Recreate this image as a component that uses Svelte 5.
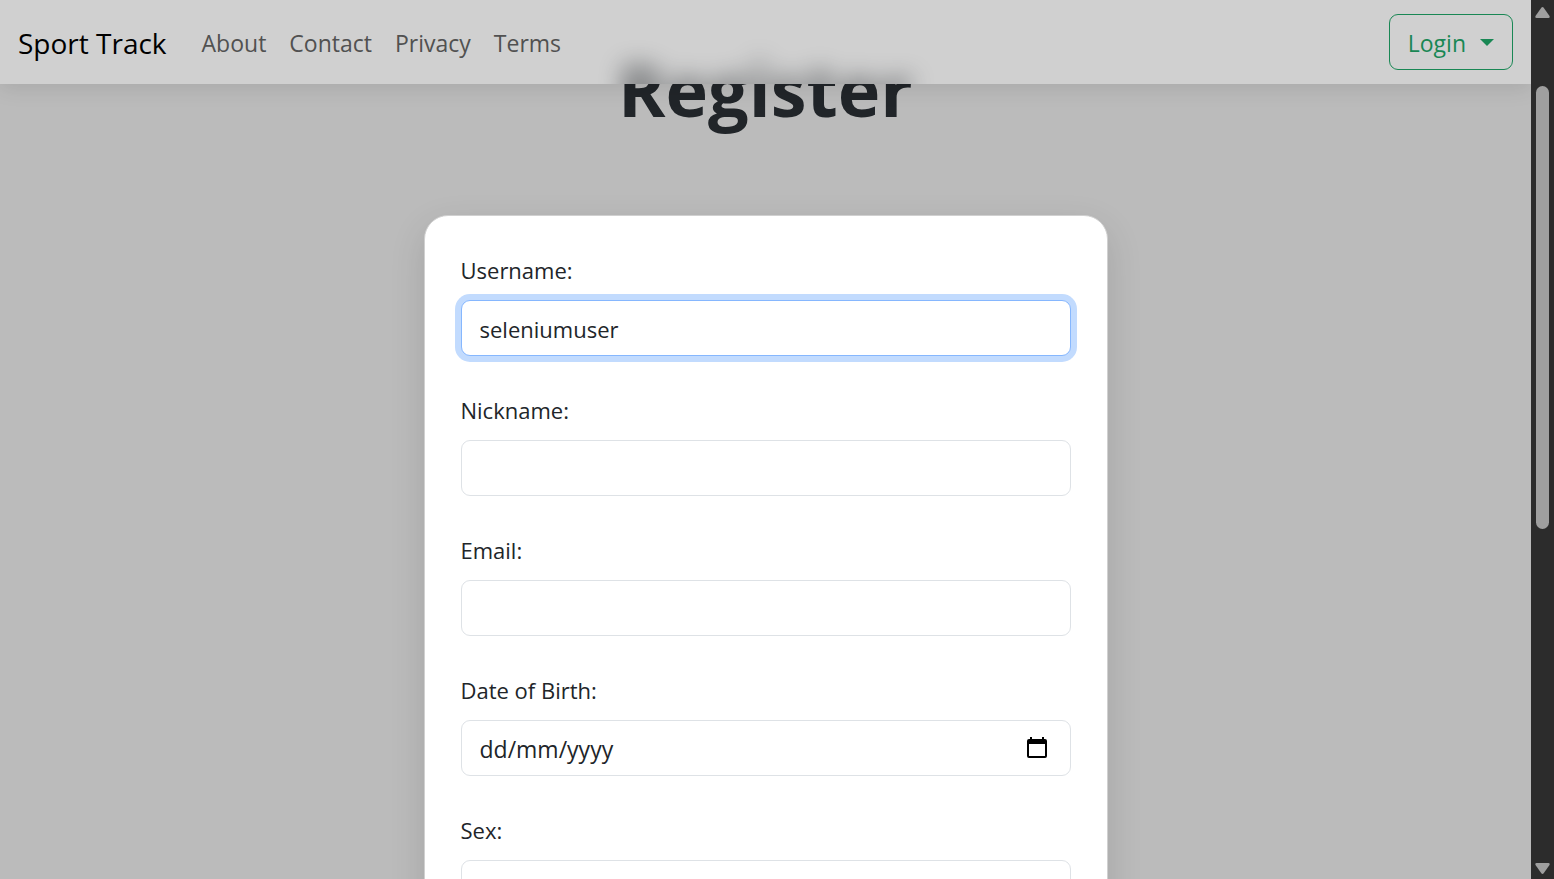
<script>
  const title = 'Register';
  const links = ['About', 'Contact', 'Privacy', 'Terms'];
  let username = $state('seleniumuser');
</script>

<div class="window">
  <div class="page">
    <main>
      <h1>{title}</h1>
      <form>
        <div class="field">
          <label for="username">Username:</label>
          <input id="username" class="control active" type="text" bind:value={username} />
        </div>
        <div class="field">
          <label for="nickname">Nickname:</label>
          <input id="nickname" class="control" type="text" />
        </div>
        <div class="field">
          <label for="email">Email:</label>
          <input id="email" class="control" type="email" />
        </div>
        <div class="field">
          <label for="birth">Date of Birth:</label>
          <div class="control date">
            <input id="birth" type="text" placeholder="dd/mm/yyyy" />
            <button type="button" aria-labelledby="birth">
              <svg width="20" height="22" viewBox="0 0 20 22" aria-hidden="true">
                <path fill-rule="evenodd" d="M3 0H5V2H15V0H17V2H18Q20 2 20 4V19Q20 21 18 21H2Q0 21 0 19V4Q0 2 2 2H3ZM2 7V19H18V7Z" />
              </svg>
            </button>
          </div>
        </div>
        <div class="field">
          <label for="sex">Sex:</label>
          <select id="sex" class="control"></select>
        </div>
      </form>
    </main>

    <header>
      <div class="frost" data-title={title} aria-hidden="true"></div>
      <a class="brand" href="#home">Sport Track</a>
      <nav>
        {#each links as link}
          <a href="#{link.toLowerCase()}">{link}</a>
        {/each}
      </nav>
      <button class="login" type="button">
        Login
        <svg width="14" height="7" viewBox="0 0 14 7" aria-hidden="true"><path d="M0 0H14L7 7Z" /></svg>
      </button>
    </header>
  </div>

  <div class="scrollbar" aria-hidden="true">
    <svg width="15" height="11" viewBox="0 0 15 11"><path d="M6.3 .8Q7.5-.6 8.7 .8L14.5 9Q15.2 11 13.5 11H1.5Q-.2 11 .5 9Z" /></svg>
    <div class="track"><div class="thumb"></div></div>
    <svg width="15" height="11" viewBox="0 0 15 11"><path d="M6.3 10.2Q7.5 11.6 8.7 10.2L14.5 2Q15.2 0 13.5 0H1.5Q-.2 0 .5 2Z" /></svg>
  </div>
</div>

<style>
  :global(body) {
    margin: 0;
    background: #bababa;
  }

  .window {
    display: grid;
    grid-template-columns: minmax(0, 1fr) 23px;
    height: 100vh;
    overflow: hidden;
    font-family: "Segoe UI", "Open Sans", "Noto Sans", sans-serif;
    font-size: 22px;
    line-height: 36px;
    color: #212529;
  }

  .page {
    position: relative;
    overflow: hidden;
    background: #bbb;
  }

  header {
    position: absolute;
    inset: 0 0 auto;
    z-index: 1;
    display: flex;
    align-items: center;
    box-sizing: border-box;
    height: 84px;
    padding: 0 18px;
    background: #d0d0d0;
    box-shadow: 0 4px 20px rgba(0, 0, 0, 0.1);
  }

  /* Frosted view of the page title that has scrolled under the bar. */
  .frost {
    position: absolute;
    inset: 0;
    z-index: -1;
    overflow: hidden;
    padding-top: 35px;
    text-align: center;
  }

  .frost::after {
    content: attr(data-title);
    display: block;
    font-size: 72px;
    line-height: 108px;
    font-weight: 700;
    opacity: 0.6;
    filter: blur(12px);
  }

  header a {
    text-decoration: none;
  }

  .brand {
    margin-right: 35px;
    padding-top: 2px;
    font-size: 28px;
    color: #000;
  }

  nav {
    display: flex;
    flex: 1;
    gap: 23px;
    padding-top: 2px;
    font-size: 23px;
  }

  nav a {
    color: #515151;
  }

  button {
    font: inherit;
    cursor: pointer;
  }

  .login {
    display: flex;
    align-items: center;
    gap: 14px;
    height: 56px;
    padding: 2px 18px 0;
    border: 1px solid #198754;
    border-radius: 9px;
    background: transparent;
    font-size: 23px;
    color: #198754;
  }

  .login svg {
    margin-bottom: 2px;
  }

  svg {
    display: block;
    fill: currentColor;
  }

  main {
    display: flex;
    flex-direction: column;
    align-items: center;
    padding-top: 35px;
  }

  h1 {
    margin: 0 0 72px;
    font-size: 72px;
    line-height: 108px;
    font-weight: 700;
  }

  form {
    display: flex;
    flex-direction: column;
    gap: 36px;
    box-sizing: border-box;
    width: 100%;
    max-width: 684px;
    padding: 36px 36px 72px;
    border: 1px solid #d0d0d0;
    border-radius: 24px;
    background: #fff;
    box-shadow: 0 12px 36px rgba(0, 0, 0, 0.12);
  }

  .field {
    display: flex;
    flex-direction: column;
    gap: 12px;
  }

  .control {
    box-sizing: border-box;
    width: 100%;
    height: 56px;
    padding: 2px 18px 0;
    border: 1px solid #dee2e6;
    border-radius: 9px;
    outline: 0;
    background: #fff;
    font: inherit;
    color: #212529;
  }

  .control.active {
    border-color: #86b7fe;
    box-shadow: 0 0 0 6px #c2dbfe;
  }

  select {
    appearance: none;
  }

  .date {
    display: flex;
    align-items: center;
    padding-right: 23px;
    font-size: 23px;
  }

  .date input {
    flex: 1;
    min-width: 0;
    padding: 0;
    border: 0;
    outline: 0;
    background: none;
    font: inherit;
    color: inherit;
  }

  .date input::placeholder {
    color: #212529;
    opacity: 1;
  }

  .date button {
    padding: 0 0 2px;
    border: 0;
    background: none;
    color: #000;
  }

  .scrollbar {
    display: flex;
    flex-direction: column;
    align-items: center;
    padding: 7px 0 5px;
    background: #2c2c2c;
    color: #9f9f9f;
  }

  .track {
    flex: 1;
    padding-top: 68px;
  }

  .thumb {
    width: 13px;
    height: 57%;
    border-radius: 7px;
    background: #9f9f9f;
  }
</style>
